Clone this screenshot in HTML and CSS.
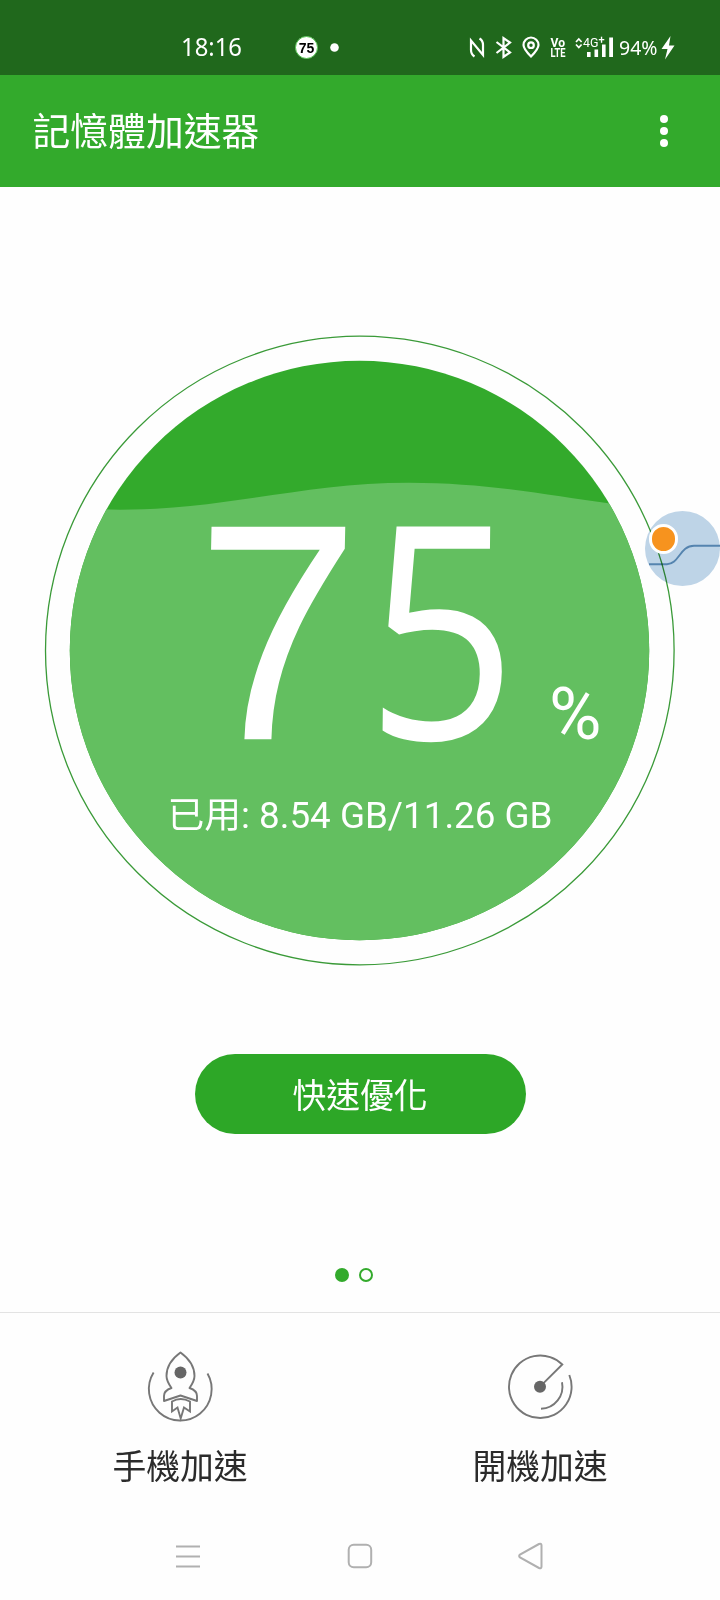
FILE: index.html
```html
<!DOCTYPE html>
<html lang="zh-Hant">
<head>
<meta charset="utf-8">
<title>記憶體加速器</title>
<link rel="stylesheet" href="styles.css">
</head>
<body>
<div class="screen">
  <header class="status">
    <svg width="720" height="75" viewBox="0 0 720 75">
      <g fill="#fff">
        <text class="time" x="181" y="56" textLength="61" lengthAdjust="spacingAndGlyphs">18:16</text>
        <circle cx="306.500" cy="47.500" r="11" stroke="#58c455" stroke-width="1"/>
        <text class="badge" x="306.500" y="52.500" text-anchor="middle">75</text>
        <circle cx="334.500" cy="47.500" r="4.300"/>
      </g>
      <g fill="none" stroke="#fff" stroke-width="2.200">
        <path d="M474.500 56.500C471.500 54.500 471 53 471 50V40.500L483 55V45C483 41.500 482 40 479.500 38.500"/>
        <path d="M496.500 42L510 52.500L503.500 57V38L510 42.500L496.500 53"/>
        <path d="M531 56.500C527 52.500 523.500 49 523.500 45a7.500 7.500 0 0 1 15 0C538.500 49 535 52.500 531 56.500Z"/>
        <circle cx="531" cy="45.200" r="2.800"/>
        <path d="M576 42L578.800 39L581.600 42M576 44.500L578.800 47.500L581.600 44.500" stroke-width="1.700"/>
      </g>
      <g fill="#fff">
        <text class="volte" x="550.500" y="46.500" textLength="14.500" lengthAdjust="spacingAndGlyphs">Vo</text>
        <text class="volte" x="550.500" y="57" textLength="15" lengthAdjust="spacingAndGlyphs">LTE</text>
        <text class="net" x="583" y="47" textLength="15.500" lengthAdjust="spacingAndGlyphs">4G</text>
        <text class="plus" x="598.500" y="43">+</text>
        <rect x="587" y="52" width="3.600" height="5"/>
        <rect x="594.500" y="49.500" width="3.600" height="7.500"/>
        <rect x="602" y="44.500" width="3.600" height="12.500"/>
        <rect x="609.200" y="37.500" width="3.800" height="19.500"/>
        <text class="battery" x="619" y="54.500" textLength="38.500" lengthAdjust="spacingAndGlyphs">94%</text>
        <path d="M670.500 36L661.500 49H667.500L665 59.500L674.500 45.500H669Z"/>
      </g>
    </svg>
  </header>

  <div class="appbar">
    <h1 class="title">記憶體加速器</h1>
    <div class="more"><i></i><i></i><i></i></div>
  </div>

  <main class="main">
    <svg class="gauge" width="632" height="632" viewBox="44 334 632 632">
      <defs><clipPath id="disc"><circle cx="359.500" cy="650.500" r="289.700"/></clipPath></defs>
      <circle cx="359.800" cy="650.500" r="314.300" fill="none" stroke="#3a9a38" stroke-width="1.300"/>
      <circle cx="359.500" cy="650.500" r="289.700" fill="#33aa2c"/>
      <path clip-path="url(#disc)" fill="#63bf60" d="M60 505C80 508 100 509.700 120 509.700C225 509.700 304 482.700 409 482.700C490 482.700 550 496 610 503.500L660 508V950H60Z"/>
      <g fill="#fff">
        <text class="seven" transform="translate(192 739.300) skewX(-1.200) scale(.952 1)">7</text>
        <text class="five" transform="translate(365.500 739.300) skewX(-.600) scale(.885 1)">5</text>
        <text class="pct" x="549" y="738.500" textLength="52.500" lengthAdjust="spacingAndGlyphs">%</text>
        <text class="used" x="167.500" y="827.500" textLength="385" lengthAdjust="spacingAndGlyphs">已用: 8.54 GB/11.26 GB</text>
      </g>
    </svg>
    <button class="boost">快速優化</button>
    <div class="pager"><i class="dot on"></i><i class="dot"></i></div>
  </main>

  <nav class="tabs">
    <div class="tab">
      <svg width="72" height="72" viewBox="144 1350 72 72" fill="none" stroke="#777" stroke-width="1.900">
        <path d="M153.600 1372.500A31.400 31.400 0 1 0 207.500 1373.500"/>
        <path d="M180.500 1352.500C170 1360 166.500 1368 166.500 1376C166.500 1381 169 1384.500 171.500 1388C167 1389.500 164 1392.500 164 1396V1401L180.500 1395.500L197 1401V1396C197 1392.500 194 1389.500 189.500 1388C192 1384.500 194.500 1381 194.500 1376C194.500 1368 191 1360 180.500 1352.500Z" stroke-linejoin="round"/>
        <path d="M172 1401.500V1411.500L177.500 1407.500L180.700 1418.500L184 1407.500L190 1411.500V1401.500Q180.500 1396.500 172 1401.500Z"/>
        <circle cx="180.500" cy="1372.500" r="6" fill="#666" stroke="none"/>
      </svg>
      <span>手機加速</span>
    </div>
    <div class="tab">
      <svg width="72" height="72" viewBox="504 1350 72 72" fill="none" stroke="#777" stroke-width="1.900">
        <path d="M540 1386.700L562.300 1364.500A31.300 31.300 0 1 0 569.300 1375"/>
        <path d="M562 1382.200A22.200 22.200 0 0 1 541 1408.800"/>
        <circle cx="540" cy="1386.700" r="6" fill="#666" stroke="none"/>
      </svg>
      <span>開機加速</span>
    </div>
  </nav>

  <footer class="sysnav">
    <svg width="26" height="26" viewBox="0 0 26 26"><path d="M1 3.500H25M1 13.500H25M1 23.500H25"/></svg>
    <svg width="26" height="26" viewBox="0 0 26 26"><rect x="1.700" y="1.700" width="22.500" height="22.500" rx="5"/></svg>
    <svg width="26" height="28" viewBox="0 0 26 28"><path d="M21 2L2 12.500Q.300 14 2 15.500L21 26Q23.500 27 23.500 24.500V3.500Q23.500 1 21 2Z"/></svg>
  </footer>

  <svg class="bubble" width="75" height="76" viewBox="645 511 75 76">
    <circle cx="682.500" cy="548.500" r="37.500" fill="#bfd5e8"/>
    <path d="M649 564.300H667C679 564.300 680 545.700 694 545.700H720" fill="none" stroke="#5585b0" stroke-width="1.900"/>
  </svg>
  <i class="knob"></i>
</div>
</body>
</html>
```
FILE: styles.css
```css
body { margin: 0; background: #fefefe; }
.screen {
  position: relative;
  display: flex;
  flex-direction: column;
  width: 720px;
  height: 1600px;
  overflow: hidden;
  background: #fefefe;
  font-family: Roboto, "Noto Sans CJK TC", sans-serif;
}
.status { height: 75px; background: #20681c; }
.status svg { display: block; }
.time { font: 400 25px "Noto Sans", sans-serif; }
.badge { font: 700 14px "Liberation Sans", sans-serif; fill: #000; }
.volte { font: 700 13px Roboto, sans-serif; }
.net { font: 400 13px Roboto, sans-serif; }
.plus { font: 500 11px Roboto, sans-serif; }
.battery { font: 400 20.5px "Noto Sans", sans-serif; }

.appbar {
  display: flex;
  align-items: center;
  justify-content: space-between;
  box-sizing: border-box;
  height: 112px;
  padding: 0 52px 0 32.5px;
  background: #33aa2c;
}
.title {
  margin: -5px 0 0;
  color: #fff;
  font-family: "Noto Sans CJK TC", sans-serif;
  font-size: 37.8px;
  font-weight: 400;
}
.more { display: flex; flex-direction: column; gap: 4px; }
.more i { width: 8px; height: 8px; border-radius: 50%; background: #fff; }

.main {
  display: flex;
  flex-direction: column;
  align-items: center;
  box-sizing: border-box;
  height: 1125px;
  padding-top: 147px;
}
.gauge { display: block; flex: none; }
.seven { font: 400 309px "Liberation Sans", sans-serif; }
.five { font: 400 298px "Open Sans", sans-serif; }
.pct { font: 400 72px Roboto, sans-serif; }
.used { font: 400 36.5px Roboto, "Noto Sans CJK TC", sans-serif; }
.boost {
  width: 331px;
  height: 80px;
  margin: 88px 0 0;
  padding: 0 0 2px;
  border: 0;
  border-radius: 40px;
  background: #2da727;
  color: #fff;
  font: 400 33.8px "Noto Sans CJK TC", sans-serif;
}
.pager { display: flex; gap: 10px; margin: 134px 13px 0 0; }
.dot {
  box-sizing: border-box;
  width: 14px;
  height: 14px;
  border: 2px solid #33aa2c;
  border-radius: 50%;
}
.on { background: #33aa2c; }

.tabs {
  display: flex;
  box-sizing: border-box;
  height: 200px;
  border-top: 1px solid #e3e3e3;
}
.tab {
  flex: 1;
  display: flex;
  flex-direction: column;
  align-items: center;
  padding-top: 37px;
  color: #2b2b2b;
  font: 400 33.8px/50px "Noto Sans CJK TC", sans-serif;
}
.tab span { margin-top: 17.500px; }

.sysnav {
  display: flex;
  align-items: center;
  justify-content: space-between;
  height: 88px;
  padding: 0 176px 0 175px;
}
.sysnav svg { fill: none; stroke: #b0b0b0; stroke-width: 2; }

.bubble { position: absolute; left: 645px; top: 511px; mix-blend-mode: multiply; }
.knob {
  position: absolute;
  left: 648.500px;
  top: 524px;
  width: 23.500px;
  height: 23.500px;
  border: 3.500px solid #fff;
  border-radius: 50%;
  background: #f7931e;
}
```
